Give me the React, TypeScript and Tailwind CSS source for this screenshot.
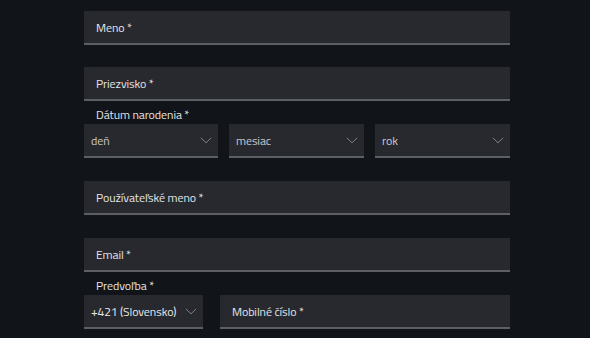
import React from "react";

const font = { fontFamily: '"Titillium Web", Roboto, "Noto Sans", sans-serif' };

function Chevron() {
  return (
    <svg width="12" height="7" viewBox="0 0 12 7" fill="none" className="shrink-0">
      <path d="M0.8 0.8 L6 5.8 L11.2 0.8" stroke="#7e8186" strokeWidth="1" />
    </svg>
  );
}

function Field({ label, className = "" }: { label: string; className?: string }) {
  return (
    <div
      className={`h-[34px] bg-[#27292e] border-b-2 border-[#5c5f64] flex items-center pt-[1px] pl-[12px] text-[12px] text-[#e4e5e7] tracking-[-0.1px] ${className}`}
    >
      {label}
    </div>
  );
}

function Select({ label, className = "" }: { label: string; className?: string }) {
  return (
    <div
      className={`h-[34px] bg-[#27292e] border-b-2 border-[#5c5f64] flex items-center justify-between pt-[1px] pl-[7px] pr-[6px] text-[12px] text-[#c9cacc] tracking-[-0.1px] ${className}`}
    >
      <span className={label.startsWith("+") ? "text-[#e8e9ea]" : ""}>{label}</span>
      <Chevron />
    </div>
  );
}

function Label({ text }: { text: string }) {
  return (
    <div className="h-[23px] flex items-end pb-[1px] pl-[12px] text-[12px] leading-4 text-[#e4e5e7] tracking-[-0.1px]">
      {text}
    </div>
  );
}

export default function App() {
  return (
    <div className="w-[590px] h-[338px] bg-[#111418] overflow-hidden" style={font}>
      <div className="ml-[84px] w-[426px] pt-[11px] flex flex-col">
        <Field label="Meno *" />
        <div className="h-[22px]" />
        <Field label="Priezvisko *" />
        <Label text="Dátum narodenia *" />
        <div className="flex gap-[11px]">
          <Select label="deň" className="w-[134px]" />
          <Select label="mesiac" className="w-[135px]" />
          <Select label="rok" className="w-[135px]" />
        </div>
        <div className="h-[23px]" />
        <Field label="Používateľské meno *" />
        <div className="h-[23px]" />
        <Field label="Email *" />
        <Label text="Predvoľba *" />
        <div className="flex gap-[17px]">
          <Select label="+421 (Slovensko)" className="w-[119px]" />
          <Field label="Mobilné číslo *" className="flex-1" />
        </div>
      </div>
    </div>
  );
}
